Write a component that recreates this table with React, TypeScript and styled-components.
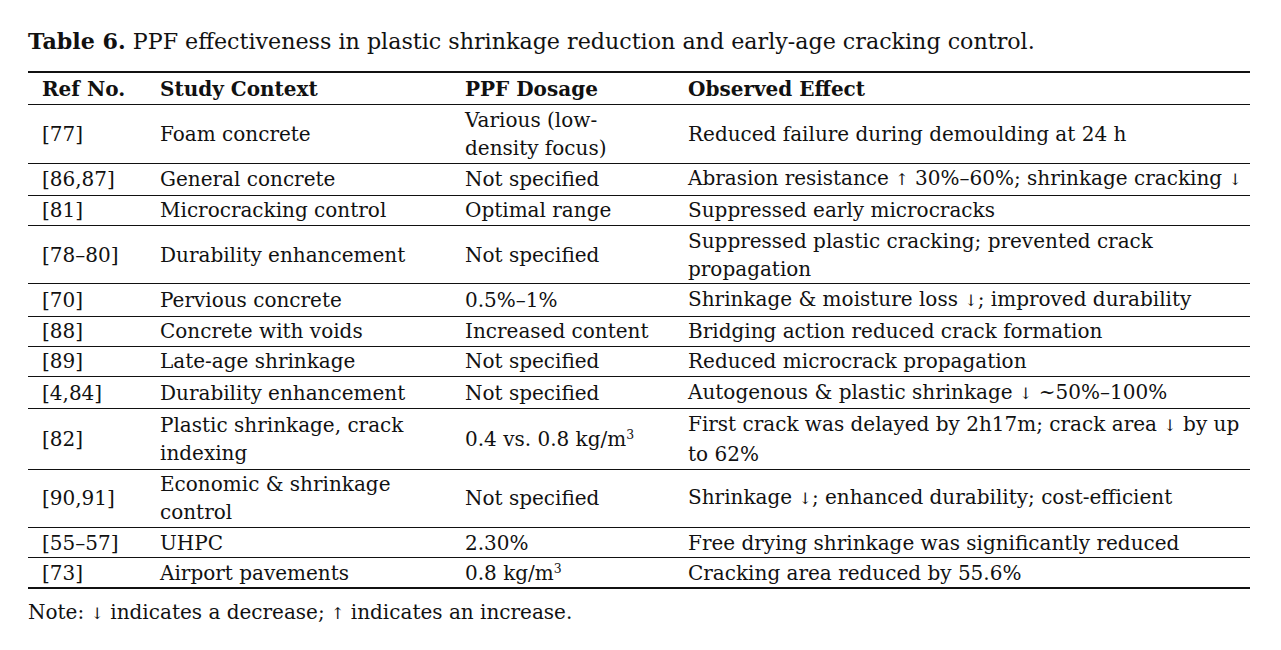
import React from 'react';
import styled, { createGlobalStyle } from 'styled-components';

const GlobalStyle = createGlobalStyle`
  html, body {
    margin: 0;
    padding: 0;
    background: #ffffff;
  }
  body {
    font-family: "DejaVu Serif", "Liberation Serif", serif;
    color: #111111;
  }
  sup {
    font-size: 0.62em;
    line-height: 0;
    vertical-align: 0.55em;
  }
`;

const Page = styled.div`
  width: 1281px;
  height: 650px;
  padding: 27px 31px 0 28px;
  box-sizing: border-box;
`;

const Caption = styled.div`
  font-size: 22.2px;
  line-height: 28px;
  margin-bottom: 16px;

  b {
    font-weight: 700;
  }
`;

const Table = styled.table`
  width: 1222px;
  table-layout: fixed;
  border-collapse: collapse;
  border-top: 2.5px solid #111;
  border-bottom: 2.5px solid #111;
  font-size: 20px;
  line-height: 28.2px;
`;

const Th = styled.th<{ $w: number }>`
  box-sizing: border-box;
  width: ${(p) => p.$w}px;
  text-align: left;
  font-weight: 700;
  padding: 2px 0 1px 14px;
  border-bottom: 1.5px solid #111;
  vertical-align: middle;
`;

const Td = styled.td`
  padding: 0.5px 0 0.5px 14px;
  border-bottom: 1.5px solid #111;
  vertical-align: middle;
  white-space: nowrap;
`;

const Arrow = styled.span`
  font-size: 0.8em;
`;

const Note = styled.div`
  font-size: 20px;
  line-height: 28px;
  margin-top: 9px;
`;

const Down = () => <Arrow>↓</Arrow>;
const Up = () => <Arrow>↑</Arrow>;

type Row = [string, React.ReactNode, React.ReactNode, React.ReactNode];

const rows: Row[] = [
  ['[77]', 'Foam concrete', <>Various (low-<br />density focus)</>, 'Reduced failure during demoulding at 24 h'],
  ['[86,87]', 'General concrete', 'Not specified', <>Abrasion resistance <Up /> 30%–60%; shrinkage cracking <Down /></>],
  ['[81]', 'Microcracking control', 'Optimal range', 'Suppressed early microcracks'],
  ['[78–80]', 'Durability enhancement', 'Not specified', <>Suppressed plastic cracking; prevented crack<br />propagation</>],
  ['[70]', 'Pervious concrete', '0.5%–1%', <>Shrinkage &amp; moisture loss <Down />; improved durability</>],
  ['[88]', 'Concrete with voids', 'Increased content', 'Bridging action reduced crack formation'],
  ['[89]', 'Late-age shrinkage', 'Not specified', 'Reduced microcrack propagation'],
  ['[4,84]', 'Durability enhancement', 'Not specified', <>Autogenous &amp; plastic shrinkage <Down /> ~50%–100%</>],
  ['[82]', <>Plastic shrinkage, crack<br />indexing</>, <>0.4 vs. 0.8 kg/m<sup>3</sup></>, <>First crack was delayed by 2h17m; crack area <Down /> by up<br />to 62%</>],
  ['[90,91]', <>Economic &amp; shrinkage<br />control</>, 'Not specified', <>Shrinkage <Down />; enhanced durability; cost-efficient</>],
  ['[55–57]', 'UHPC', '2.30%', 'Free drying shrinkage was significantly reduced'],
  ['[73]', 'Airport pavements', <>0.8 kg/m<sup>3</sup></>, 'Cracking area reduced by 55.6%'],
];

export default function App() {
  return (
    <Page>
      <GlobalStyle />
      <Caption>
        <b>Table 6.</b> PPF effectiveness in plastic shrinkage reduction and early-age cracking control.
      </Caption>
      <Table>
        <thead>
          <tr>
            <Th $w={118}>Ref No.</Th>
            <Th $w={305}>Study Context</Th>
            <Th $w={223}>PPF Dosage</Th>
            <Th $w={576}>Observed Effect</Th>
          </tr>
        </thead>
        <tbody>
          {rows.map((r, i) => (
            <tr key={i}>
              {r.map((c, j) => (
                <Td key={j}>{c}</Td>
              ))}
            </tr>
          ))}
        </tbody>
      </Table>
      <Note>
        Note: <Down /> indicates a decrease; <Up /> indicates an increase.
      </Note>
    </Page>
  );
}
